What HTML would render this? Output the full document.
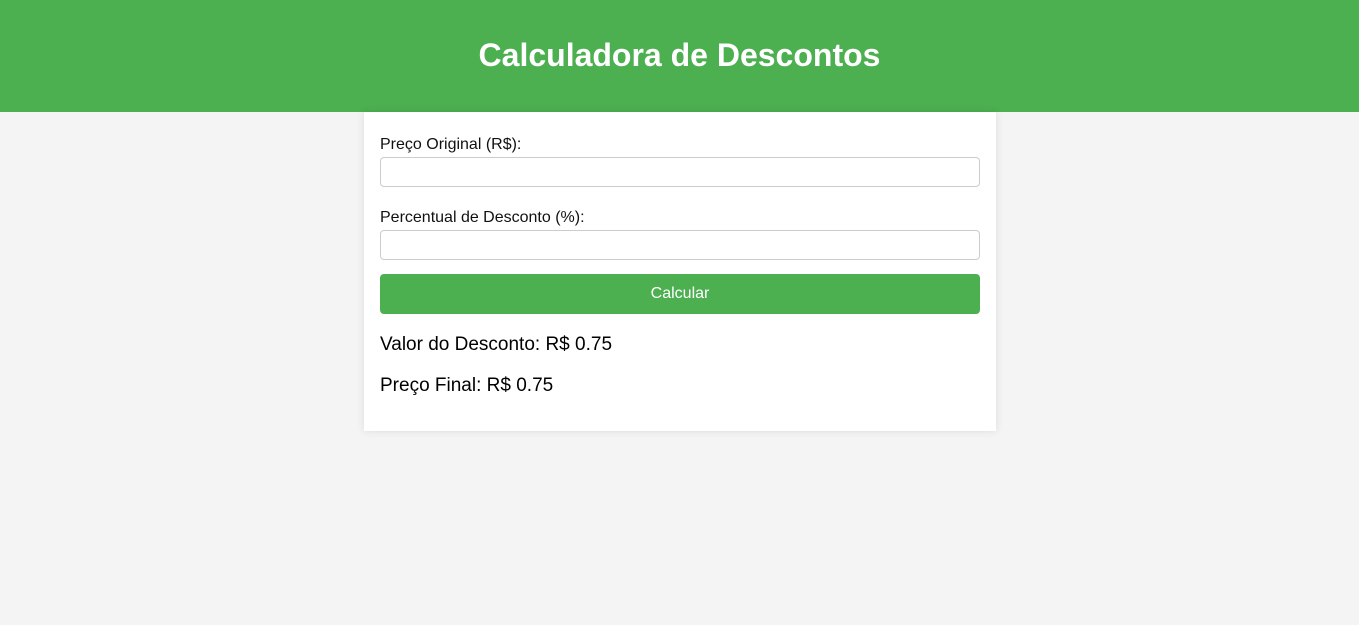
<!DOCTYPE html>
<html><head><meta charset="utf-8"><style>
body{margin:0;background:#f4f4f4;font-family:"Liberation Sans",Arial,sans-serif;}
header{background:#4caf50;height:112px;color:#fff;text-align:center;}
header h1{margin:0;font-size:32px;line-height:110px;font-weight:bold;}
.card{position:absolute;left:364px;top:112px;width:600px;height:287px;padding:16px;background:#fff;box-shadow:0 0 8px rgba(0,0,0,0.1);}
label{display:block;font-size:16px;color:#111;position:absolute;left:16px;}
.in{position:absolute;left:16px;width:598px;height:28px;border:1px solid #ccc;border-radius:4px;}
.btn{position:absolute;left:16px;top:162px;width:600px;height:40px;background:#4caf50;color:#fff;border-radius:4px;text-align:center;line-height:39px;font-size:16px;}
.r{position:absolute;left:16px;font-size:19px;color:#000;}
</style></head><body>
<header><h1>Calculadora de Descontos</h1></header>
<div class="card">
<label style="top:24px">Preço Original (R$):</label>
<div class="in" style="top:45px"></div>
<label style="top:97px">Percentual de Desconto (%):</label>
<div class="in" style="top:118px"></div>
<div class="btn">Calcular</div>
<div class="r" style="top:222px">Valor do Desconto: R$ 0.75</div>
<div class="r" style="top:263px">Preço Final: R$ 0.75</div>
</div>
</body></html>
